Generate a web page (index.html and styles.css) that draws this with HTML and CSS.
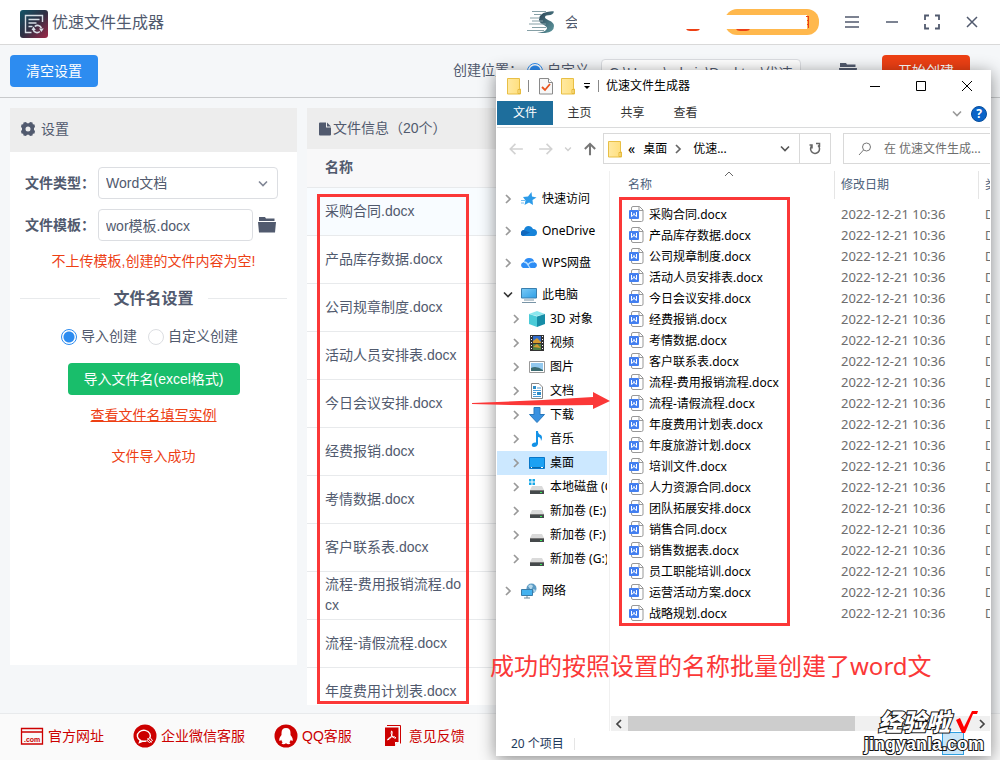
FILE: index.html
```html
<!DOCTYPE html>
<html lang="zh-CN">
<head>
<meta charset="utf-8">
<meta name="viewport" content="width=device-width, initial-scale=1">
<title>优速文件生成器</title>
<link rel="stylesheet" href="styles.css">
</head>
<body>
<svg class="sprite" aria-hidden="true">
  <defs>
    <linearGradient id="g-logo" x1="0" y1="0" x2="1" y2="1"><stop offset="0" stop-color="#125468"/><stop offset=".5" stop-color="#2f2f43"/><stop offset="1" stop-color="#a02848"/></linearGradient>
    <linearGradient id="g-folder" x1="0" y1="0" x2="1" y2="0"><stop offset="0" stop-color="#ffe9a2"/><stop offset="1" stop-color="#ffdf7c"/></linearGradient>
    <linearGradient id="g-blue" x1="0" y1="0" x2="1" y2="1"><stop offset="0" stop-color="#7ccbf6"/><stop offset="1" stop-color="#2f9fe6"/></linearGradient>
    <linearGradient id="g-s" x1="0" y1="0" x2="1" y2="1"><stop offset="0" stop-color="#263b4e"/><stop offset="1" stop-color="#5f9aa0"/></linearGradient>
  </defs>
  <symbol id="word" viewBox="0 0 15 16"><path d="M4 .5h6.500l3.500 3.500v10q0 1.500-1.500 1.500H4q-1.500 0-1.500-1.500V2q0-1.500 1.500-1.500z" fill="#fff" stroke="#989898"/><path d="M10 .5v4h4" fill="none" stroke="#989898"/><rect x="0" y="4" width="10" height="9" rx="1" fill="#437ff0"/><path d="M2.500 6v4.500L5 8.500l2.500 2V6M5 7v2" fill="none" stroke="#fff"/></symbol>
  <symbol id="folder" viewBox="0 0 14 18"><path d="M.5 1.500h12v10.500h1v5h-13z" fill="url(#g-folder)" stroke="#e8bf45"/><path d="M11 12.500h2v4h-2z" fill="#ffe9a2" stroke="#e5b93b"/></symbol>
  <symbol id="darkfolder" viewBox="0 0 18 16"><path d="M1 0h6l1 1.500h8.500V4H1zM0 5h18l-1 10.500H1z" fill="#515a6e"/></symbol>
  <symbol id="right" viewBox="0 0 8 10"><path d="M2 1l4 4-4 4" fill="none" stroke="currentColor" stroke-width="1.700"/></symbol>
  <symbol id="down" viewBox="0 0 10 8"><path d="M1 1.500l4 4 4-4" fill="none" stroke="currentColor" stroke-width="1.600"/></symbol>
  <symbol id="drive" viewBox="0 0 16 16"><path d="M3 5h10l2 4H1z" fill="#dadada"/><path d="M1 9h14v4H1z" fill="#45494b"/><path d="M1 9h14v1H1z" fill="#777"/><path d="M11 11h2v1h-2z" fill="#38ee5a"/></symbol>
</svg>

<div class="app">
  <header class="app-head">
    <svg class="logo" viewBox="0 0 28 28"><rect width="28" height="28" rx="3" fill="url(#g-logo)"/><g fill="none" stroke="#d7dde5" stroke-width="1.400"><path d="M22.500 12V5.500h-17v17h6M8.500 9.500h11M8.500 13h8M8.500 16.500h4"/><path d="M21.300 18a4 4 0 0 0-6.500-1.500M13.300 20a4 4 0 0 0 6.500 1.500" stroke-width="1.700"/></g><path d="M11.500 20l2-3.500 2.300 3.500zM19 18.500h4.800l-2.400 3.500z" fill="#d7dde5"/></svg>
    <h1 class="app-title">优速文件生成器</h1>
    <div class="member">
      <svg class="s-logo" viewBox="0 0 28 24"><path d="M27 1.500q-1 4-6 3.800-3 0-3 2 0 1.500 4 3.200 5 2 5 5.500 0 6-9 7h-8q9-1 10-4.500 0-2-4-4-4-2-4-5 0-6 8-7.500 5-1 7-.5z" fill="url(#g-s)"/><path d="M5 1.500h14M7 4.500h8M3 8h10M5 11h11M2 14h17M5 17.500h14M0 20.500h17" stroke="#86a0a6" stroke-width="1.200"/></svg>
      <span class="member-text">会</span>
      <div class="promo"><svg viewBox="0 0 136 28"><rect x="40" y="1" width="94" height="26" rx="12" fill="#ffb84d"/><path d="M0 7h122v14H0z" fill="#fff"/><path d="M1 21h14q-1 2-4 2H5q-3 0-4-2zM51 21h14q-1 2-4 2h-6q-3 0-4-2z" fill="#ed4014"/><path d="M121 8.500h3M123.500 9v11M122 12.500h2M122 16.500h2" fill="none" stroke="#ed4014"/></svg></div>
    </div>
    <div class="app-controls">
      <button class="plain" aria-label="菜单"><svg viewBox="0 0 16 16"><path d="M1 3h14M1 8h14M1 13h14" stroke="#515a6e" stroke-width="1.500"/></svg></button>
      <button class="plain" aria-label="最小化"><svg viewBox="0 0 16 16"><path d="M2 8h12" stroke="#515a6e" stroke-width="1.500"/></svg></button>
      <button class="plain" aria-label="全屏"><svg viewBox="0 0 16 16"><path d="M1 6V1.500h4M11 1.500h4V6M15 10v4.500h-4M5 14.500H1V10" fill="none" stroke="#515a6e" stroke-width="1.800"/></svg></button>
      <button class="plain" aria-label="关闭"><svg viewBox="0 0 16 16"><path d="M3 3l10 10M13 3L3 13" stroke="#515a6e" stroke-width="1.500"/></svg></button>
    </div>
  </header>

  <div class="toolbar">
    <button class="btn btn-blue">清空设置</button>
    <div class="target">
      <div class="target-choice"><span>创建位置：</span><label class="radio"><input type="radio" name="target" checked>自定义</label></div>
      <input class="field target-path" type="text" value="C:\Users\admin\Desktop\优速" aria-label="创建路径">
      <button class="plain target-browse" aria-label="浏览"><svg class="ic-folder"><use href="#darkfolder"/></svg></button>
      <button class="btn btn-red">开始创建</button>
    </div>
  </div>

  <main class="content">
    <section class="panel settings">
      <h2 class="panel-head"><svg class="gear" viewBox="0 0 16 16"><path fill="#515a6e" fill-rule="evenodd" d="M3.500 1.500L6 1l1 1.200h2L10 1l2.500.5.3 1.700 1.700.3L15 6l-1 1v2l1 1-.5 2.500-1.700.3-.3 1.700L10 15l-1-1.200H7L6 15l-2.500-.5-.3-1.700-1.700-.3L1 10l1-1V7L1 6l.5-2.500 1.700-.3zM8 5.500a2.500 2.500 0 1 0 0 5 2.500 2.500 0 0 0 0-5z"/></svg>设置</h2>
      <form class="settings-body">
        <div class="form-row"><label class="form-label" for="type">文件类型：</label><div class="select-wrap"><select class="field" id="type"><option>Word文档</option></select><svg class="select-arrow"><use href="#down"/></svg></div></div>
        <div class="form-row"><label class="form-label" for="tpl">文件模板：</label><input class="field tpl" id="tpl" type="text" value="wor模板.docx"><button type="button" class="plain" aria-label="选择模板"><svg class="ic-folder"><use href="#darkfolder"/></svg></button></div>
        <p class="warn">不上传模板,创建的文件内容为空!</p>
        <h3 class="divider">文件名设置</h3>
        <div class="choices"><label class="radio"><input type="radio" name="mode" checked>导入创建</label><label class="radio"><input type="radio" name="mode">自定义创建</label></div>
        <button type="button" class="btn btn-green">导入文件名(excel格式)</button>
        <a class="example" href="#">查看文件名填写实例</a>
        <p class="warn">文件导入成功</p>
      </form>
    </section>

    <section class="panel files">
      <h2 class="panel-head"><svg class="ic-file" viewBox="0 0 12 14"><path d="M1 0.500h6v5h5v7q0 1-1 1H1q-1 0-1-1V1.500q0-1 1-1zM8 .5l4 4H8z" fill="#515a6e"/></svg>文件信息（20个）</h2>
      <table class="names">
        <thead><tr><th class="col-name">名称</th><th></th></tr></thead>
        <tbody>
          <tr class="current"><td>采购合同.docx</td><td></td></tr>
          <tr><td>产品库存数据.docx</td><td></td></tr>
          <tr><td>公司规章制度.docx</td><td></td></tr>
          <tr><td>活动人员安排表.docx</td><td></td></tr>
          <tr><td>今日会议安排.docx</td><td></td></tr>
          <tr><td>经费报销.docx</td><td></td></tr>
          <tr><td>考情数据.docx</td><td></td></tr>
          <tr><td>客户联系表.docx</td><td></td></tr>
          <tr><td>流程-费用报销流程.docx</td><td></td></tr>
          <tr><td>流程-请假流程.docx</td><td></td></tr>
          <tr><td>年度费用计划表.docx</td><td></td></tr>
        </tbody>
      </table>
    </section>
  </main>

  <footer class="app-foot">
    <a href="#"><svg viewBox="0 0 24 24"><path d="M1.500 4.500h21v15.500h-21zM1.500 8h21" fill="none" stroke="#c00" stroke-width="1.300"/><text x="4" y="18" class="com">.com</text></svg>官方网址</a>
    <a href="#"><svg viewBox="0 0 24 24"><circle cx="12" cy="12" r="11.500" fill="#c00"/><path d="M16.500 14.500a6.500 5.500 0 1 0-3 2.300M7.500 15.500l-1 3 3.500-1.500" fill="none" stroke="#fff" stroke-width="1.400"/><path d="M17 13.500l2.500 3-3 2-2.500-2zM14.500 14l4 4.500" fill="#c00" stroke="#fff"/></svg>企业微信客服</a>
    <a href="#"><svg viewBox="0 0 24 24"><circle cx="12" cy="12" r="11.500" fill="#c00"/><path d="M12 4q-4.500 0-4.500 5v2q-3 3.500-2 6 .8 0 1.700-1.200.4 1.600 1.500 2.500-1.200.5-1 1.500 2.200 1.200 4.300-.5 2.100 1.700 4.300.5.200-1-1-1.500 1.100-.9 1.500-2.500.9 1.200 1.700 1.200 1-2.500-2-6V9q0-5-4.500-5z" fill="#fff"/></svg>QQ客服</a>
    <a href="#"><svg viewBox="0 0 24 24"><path d="M6 1.500h13.500v18" fill="none" stroke="#c00"/><path d="M4 3.500h13.500V17l-4 5H4z" fill="#c00"/><path d="M13.500 22v-4.500h4" fill="#fff" stroke="#c00"/><path d="M10.500 7q1.500 0 0 5-2 4-4 4 0-2 4-3 4-1 4.500 1-1.500 1-4-2-1.500-3-.5-5z" fill="none" stroke="#fff"/></svg>意见反馈</a>
  </footer>
</div>

<section class="explorer" aria-label="文件资源管理器">
  <div class="ex-title">
    <div class="quick"><svg class="ic-f"><use href="#folder"/></svg><i class="bar"></i><svg class="ic-f" viewBox="0 0 14 18"><path d="M.5 1.500h9l4 4v11.500H.5z" fill="#f7f7f7" stroke="#8a8a8a"/><path d="M9.500 1.500v4h4" fill="#fff" stroke="#8a8a8a"/><path d="M3 10l3 3 5-6" fill="none" stroke="#e8531c" stroke-width="1.800"/></svg><svg class="ic-f"><use href="#folder"/></svg><svg class="ic-drop" viewBox="0 0 8 8"><path d="M1 1.500h6" stroke="#000"/><path d="M1 4h6L4 7z"/></svg><i class="bar"></i></div>
    <span class="ex-name">优速文件生成器</span>
    <div class="ex-controls">
      <button class="plain" aria-label="最小化"><svg viewBox="0 0 12 12"><path d="M1 6.500h10" stroke="#000"/></svg></button>
      <button class="plain" aria-label="最大化"><svg viewBox="0 0 12 12"><path d="M1.500 1.500h9v9h-9z" fill="none" stroke="#000"/></svg></button>
      <button class="plain" aria-label="关闭"><svg viewBox="0 0 12 12"><path d="M1 1l10 10M11 1L1 11" stroke="#000"/></svg></button>
    </div>
  </div>
  <nav class="tabs"><button class="plain tab active">文件</button><button class="plain tab">主页</button><button class="plain tab">共享</button><button class="plain tab">查看</button>
    <span class="tab-end"><svg class="ic-down"><use href="#down"/></svg><svg class="ic-help" viewBox="0 0 16 16"><circle cx="8" cy="8" r="7.500" fill="#0a64c8" stroke="#084e9c"/><text x="8" y="12" text-anchor="middle" class="help">?</text></svg></span>
  </nav>
  <div class="address">
    <div class="moves">
      <button class="plain" aria-label="后退"><svg viewBox="0 0 14 14"><path d="M13 7H2M6.500 2.500L2 7l4.500 4.500" fill="none" stroke="#d2d2d2" stroke-width="1.400"/></svg></button>
      <button class="plain" aria-label="前进"><svg viewBox="0 0 14 14"><path d="M1 7h11M7.500 2.500L12 7l-4.500 4.500" fill="none" stroke="#d2d2d2" stroke-width="1.400"/></svg></button>
      <button class="plain small" aria-label="最近"><svg viewBox="0 0 14 14"><path d="M3 5l4 4 4-4" fill="none" stroke="#cfcfcf" stroke-width="2"/></svg></button>
      <button class="plain" aria-label="向上"><svg viewBox="0 0 14 14"><path d="M7 12.500V3M2.500 7L7 2.500 11.500 7" fill="none" stroke="#777" stroke-width="1.800"/></svg></button>
    </div>
    <div class="path"><svg class="ic-f"><use href="#folder"/></svg><span class="crumb-more">«</span><a href="#">桌面</a><svg class="ic-right"><use href="#right"/></svg><a href="#">优速...</a><svg class="ic-down push"><use href="#down"/></svg>
      <button class="plain refresh" aria-label="刷新"><svg viewBox="0 0 14 14"><path d="M10 3.500a4.500 4.500 0 1 1-5.500-.3M4 6.500V3H1.500M8 1.500h3.500V5" fill="none" stroke="#666" stroke-width="1.500"/></svg></button></div>
    <label class="search"><svg viewBox="0 0 14 14"><circle cx="8.500" cy="5" r="4" fill="none" stroke="#777"/><path d="M5.500 8L1 13" stroke="#777"/></svg><input type="text" placeholder="在 优速文件生成..." aria-label="搜索"></label>
  </div>
  <div class="ex-main">
    <ul class="tree">
      <li class="top"><svg class="ic-right"><use href="#right"/></svg><svg class="ic" viewBox="0 0 16 16"><path d="M10.500 1l.5 4.500 4.500 1-4 2.500.5 5-4-2.500L3.500 14l1-4.500L2 6l5-.5z" fill="#2d9be8"/><path d="M0 9.500h4M0 12h3" stroke="#74bdf0"/></svg>快速访问</li>
      <li class="top"><svg class="ic-right"><use href="#right"/></svg><svg class="ic" viewBox="0 0 16 16"><path d="M2 13q-2-.5-2-3t3-3q1-4 4.500-4 3 0 4.500 3 4 0 4 4 0 2.500-2.500 3z" fill="#1683d9"/><path d="M1 7.500q2-1 3 0l5 2L2 13q-3-1-2-3.500z" fill="#1268bd"/></svg>OneDrive</li>
      <li class="top"><svg class="ic-right"><use href="#right"/></svg><svg class="ic" viewBox="0 0 16 16"><path d="M2 13q-2-1-2-3t3-3q1-4 5-4 5 0 5 4 3 1 3 3t-2 3z" fill="#2d8df5"/><path d="M3 7q3 0 4 3l2 3M7 10q2-4 6-3" fill="none" stroke="#b8defe" stroke-width="1.300"/></svg>WPS网盘</li>
      <li class="top open"><svg class="ic-down"><use href="#down"/></svg><svg class="ic" viewBox="0 0 16 16"><path d="M.5 1.500h15v9.500H.5z" fill="url(#g-blue)" stroke="#3a7fae"/><path d="M1 15.500h14M3 13h10" stroke="#7894a6"/></svg>此电脑</li>
      <li><svg class="ic-right"><use href="#right"/></svg><svg class="ic" viewBox="0 0 16 16"><path d="M0 3l8-3 8 3-8 2z" fill="#8be7ee"/><path d="M0 3l8 2.500V16l-8-3z" fill="#4acbd8"/><path d="M8 5.500L16 3v10l-8 3z" fill="#168da7"/></svg>3D 对象</li>
      <li><svg class="ic-right"><use href="#right"/></svg><svg class="ic" viewBox="0 0 16 16"><path d="M1 0h14v16H1z" fill="#333"/><path d="M4 1h8v7H4z" fill="#316ccb"/><path d="M4 9h8v6H4z" fill="#507f45"/><path d="M4 6l4-3 4 4v1H4zM4 12l4-3 4 4" fill="#d29a30"/><path d="M2.500 1v15M13.500 1v15" stroke="#fff" stroke-dasharray="1 2"/></svg>视频</li>
      <li><svg class="ic-right"><use href="#right"/></svg><svg class="ic" viewBox="0 0 16 16"><path d="M.5 2.500h15v11H.5z" fill="#fff" stroke="#999"/><path d="M2 4h12v8H2z" fill="#93c9ef"/><path d="M2 9q5-3 12 2v1H2z" fill="#3c6c72"/></svg>图片</li>
      <li><svg class="ic-right"><use href="#right"/></svg><svg class="ic" viewBox="0 0 16 16"><path d="M2.500.5H10l3.500 3.500v11.500h-11z" fill="#fff" stroke="#888"/><path d="M8 5h4M4 7.500h8M4 9.500h3M4 11.500h3M4 13.500h8" stroke="#4a9bd4"/><path d="M4 3h3v3H4zM8 9h4v3H8z" fill="#2d8cc7"/></svg>文档</li>
      <li><svg class="ic-right"><use href="#right"/></svg><svg class="ic" viewBox="0 0 16 16"><path d="M5 .5h6v7h4.500L8 15.500.5 7.500H5z" fill="#3991e0" stroke="#2878bd"/></svg>下载</li>
      <li><svg class="ic-right"><use href="#right"/></svg><svg class="ic" viewBox="0 0 16 16"><path d="M7 0h2q0 3 3 4 2 2 0 6 0-4-3-4v7q-1 3-4 3-3-.5-2-3 1-2 4-1.500z" fill="#1492e6"/></svg>音乐</li>
      <li class="selected"><svg class="ic-right"><use href="#right"/></svg><svg class="ic" viewBox="0 0 16 16"><path d="M.5 2.500h15v11H.5z" fill="#1ca1f3" stroke="#0877c9"/><path d="M1 12.500h14" stroke="#0b67a8"/><path d="M2 12.500h1M12 12.500h2" stroke="#fff"/></svg>桌面</li>
      <li><svg class="ic-right"><use href="#right"/></svg><svg class="ic" viewBox="0 0 16 16"><use href="#drive" y="2" width="16" height="16"/><path d="M0 0h2.500v2.500H0zM3.500 0H6v2.500H3.500zM0 3.500h2.500V6H0zM3.500 3.500H6V6H3.500z" fill="#18a8e8"/></svg>本地磁盘 (C:)</li>
      <li><svg class="ic-right"><use href="#right"/></svg><svg class="ic"><use href="#drive" y="2" width="16" height="16"/></svg>新加卷 (E:)</li>
      <li><svg class="ic-right"><use href="#right"/></svg><svg class="ic"><use href="#drive" y="2" width="16" height="16"/></svg>新加卷 (F:)</li>
      <li><svg class="ic-right"><use href="#right"/></svg><svg class="ic"><use href="#drive" y="2" width="16" height="16"/></svg>新加卷 (G:)</li>
      <li class="top net"><svg class="ic-right"><use href="#right"/></svg><svg class="ic" viewBox="0 0 16 16"><circle cx="10.500" cy="5.500" r="5" fill="#5c9bc4"/><path d="M7 3q3-3 5 0l-2 4zM12 6l3 1-2 3z" fill="#b5d8eb"/><path d="M.5 6.500h11v6H.5z" fill="#44b2ef" stroke="#397ca9"/><path d="M3 15h6M6 13v2" stroke="#708b9a"/></svg>网络</li>
    </ul>
    <div class="list">
      <div class="list-view">
      <table class="listing">
        <thead><tr><th class="c-name">名称<svg class="sort" viewBox="0 0 10 6"><path d="M1 5l4-4 4 4" fill="none" stroke="#666"/></svg></th><th class="c-date">修改日期</th><th class="c-type">类型</th></tr></thead>
        <tbody>
          <tr><td><svg class="ic-w"><use href="#word"/></svg>采购合同.docx</td><td>2022-12-21 10:36</td><td>DOCX</td></tr>
          <tr><td><svg class="ic-w"><use href="#word"/></svg>产品库存数据.docx</td><td>2022-12-21 10:36</td><td>DOCX</td></tr>
          <tr><td><svg class="ic-w"><use href="#word"/></svg>公司规章制度.docx</td><td>2022-12-21 10:36</td><td>DOCX</td></tr>
          <tr><td><svg class="ic-w"><use href="#word"/></svg>活动人员安排表.docx</td><td>2022-12-21 10:36</td><td>DOCX</td></tr>
          <tr><td><svg class="ic-w"><use href="#word"/></svg>今日会议安排.docx</td><td>2022-12-21 10:36</td><td>DOCX</td></tr>
          <tr><td><svg class="ic-w"><use href="#word"/></svg>经费报销.docx</td><td>2022-12-21 10:36</td><td>DOCX</td></tr>
          <tr><td><svg class="ic-w"><use href="#word"/></svg>考情数据.docx</td><td>2022-12-21 10:36</td><td>DOCX</td></tr>
          <tr><td><svg class="ic-w"><use href="#word"/></svg>客户联系表.docx</td><td>2022-12-21 10:36</td><td>DOCX</td></tr>
          <tr><td><svg class="ic-w"><use href="#word"/></svg>流程-费用报销流程.docx</td><td>2022-12-21 10:36</td><td>DOCX</td></tr>
          <tr><td><svg class="ic-w"><use href="#word"/></svg>流程-请假流程.docx</td><td>2022-12-21 10:36</td><td>DOCX</td></tr>
          <tr><td><svg class="ic-w"><use href="#word"/></svg>年度费用计划表.docx</td><td>2022-12-21 10:36</td><td>DOCX</td></tr>
          <tr><td><svg class="ic-w"><use href="#word"/></svg>年度旅游计划.docx</td><td>2022-12-21 10:36</td><td>DOCX</td></tr>
          <tr><td><svg class="ic-w"><use href="#word"/></svg>培训文件.docx</td><td>2022-12-21 10:36</td><td>DOCX</td></tr>
          <tr><td><svg class="ic-w"><use href="#word"/></svg>人力资源合同.docx</td><td>2022-12-21 10:36</td><td>DOCX</td></tr>
          <tr><td><svg class="ic-w"><use href="#word"/></svg>团队拓展安排.docx</td><td>2022-12-21 10:36</td><td>DOCX</td></tr>
          <tr><td><svg class="ic-w"><use href="#word"/></svg>销售合同.docx</td><td>2022-12-21 10:36</td><td>DOCX</td></tr>
          <tr><td><svg class="ic-w"><use href="#word"/></svg>销售数据表.docx</td><td>2022-12-21 10:36</td><td>DOCX</td></tr>
          <tr><td><svg class="ic-w"><use href="#word"/></svg>员工职能培训.docx</td><td>2022-12-21 10:36</td><td>DOCX</td></tr>
          <tr><td><svg class="ic-w"><use href="#word"/></svg>运营活动方案.docx</td><td>2022-12-21 10:36</td><td>DOCX</td></tr>
          <tr><td><svg class="ic-w"><use href="#word"/></svg>战略规划.docx</td><td>2022-12-21 10:36</td><td>DOCX</td></tr>
        </tbody>
      </table>
      </div>
      <div class="hscroll"><svg class="arrow left"><use href="#right"/></svg><i class="thumb"></i><svg class="arrow"><use href="#right"/></svg></div>
    </div>
  </div>
  <div class="status"><span>20 个项目</span><i class="view-toggle"></i></div>
</section>

<div class="mark mark-names"></div>
<div class="mark mark-listing"></div>
<svg class="mark-arrow" viewBox="0 0 138 20"><path d="M0 11q60-2 121-6V0l17 9-17 8v-4Q60 14 0 12z" fill="#fb3838"/></svg>
<p class="caption">成功的按照设置的名称批量创建了word文</p>
<div class="watermark"><div class="wm-name">经验啦<svg viewBox="0 0 24 24"><path d="M1 10l4-2 4 9L17 1h6l-1 3h-4L10 23H7z" fill="#f00"/></svg></div><div class="wm-site">jingyanla.com</div></div>
</body>
</html>
```
FILE: styles.css
```css
* { box-sizing: border-box; }
html, body { height: 100%; margin: 0; }
body {
  position: relative;
  overflow: hidden;
  font: 14px/21px "Liberation Sans", "Noto Sans CJK SC", sans-serif;
  color: #515a6e;
}
h1, h2, h3, p, ul { margin: 0; padding: 0; font-weight: 400; }
svg { display: block; flex: none; }
a { color: inherit; text-decoration: none; }
button, input, select { font: inherit; color: inherit; }
.sprite { position: absolute; width: 0; height: 0; }
.plain { padding: 0; border: 0; background: none; display: flex; align-items: center; justify-content: center; }

/* Generator window */
.app { display: flex; flex-direction: column; height: 100%; background: #f5f7f9; }
.app-head { display: flex; align-items: center; height: 45px; padding: 0 8px 0 20px; background: #fff; border-bottom: 1px solid #d9d9d9; }
.logo { width: 28px; height: 28px; margin-top: 3px; }
.app-title { flex: 1; margin-left: 4px; font-size: 16px; }
.member { display: flex; align-items: center; margin-right: 11px; }
.s-logo { width: 28px; height: 24px; }
.member-text { width: 12px; margin-left: 10px; overflow: hidden; }
.promo { margin-left: 108px; width: 136px; }
.app-controls { display: flex; }
.app-controls .plain { width: 40px; height: 32px; }
.app-controls svg { width: 16px; height: 16px; }

.toolbar { display: flex; align-items: flex-start; justify-content: space-between; height: 53px; padding: 10px 30px 10px 10px; border-bottom: 1px solid #c8cacc; }
.btn { height: 32px; padding: 0 15px; border: 0; border-radius: 4px; color: #fff; font-size: 14px; }
.btn-blue { width: 88px; background: #2d8cf0; }
.btn-red { width: 88px; background: #ed4014; }
.btn-green { width: 172px; background: #19be6b; }
.target { display: flex; align-items: flex-start; }
.target-choice { display: flex; margin-top: 5px; }
.target-choice .radio { margin-left: 4px; }
.target .target-path { width: 200px; height: 26px; margin: 4px 37px 0 12px; }
.target-browse { width: 20px; height: 32px; margin-right: 24px; }
.ic-folder { width: 18px; height: 16px; }
.field { height: 32px; padding: 0 7px; border: 1px solid #dcdee2; border-radius: 4px; background: #fff; outline: 0; }

.radio { display: flex; align-items: center; gap: 4px; }
.radio input { appearance: none; width: 16px; height: 16px; margin: 0; border: 1px solid #dcdee2; border-radius: 50%; background: #fff; }
.radio input:checked { border-color: #2d8cf0; background: radial-gradient(circle, #2d8cf0 5px, #fff 6px); }

.content { display: flex; flex: 1; gap: 10px; min-height: 0; padding: 10px 10px 8px; }
.panel { background: #fff; }
.panel-head { display: flex; align-items: center; background: #ededed; font-size: 14px; }
.settings { width: 287px; align-self: flex-start; }
.settings .panel-head { height: 44px; padding: 0 0 2px 10px; gap: 5px; }
.gear { width: 16px; height: 16px; }
.settings-body { display: flex; flex-direction: column; align-items: center; padding: 15px 10px 198px; }
.form-row { display: flex; align-items: center; align-self: stretch; padding-left: 5px; margin-bottom: 10px; }
.form-label { width: 73px; font-weight: 700; white-space: nowrap; }
.select-wrap { position: relative; }
.select-wrap .field { width: 180px; appearance: none; }
.select-arrow { position: absolute; right: 10px; top: 13px; width: 10px; height: 8px; color: #808695; }
.tpl { width: 155px; margin-right: 5px; }
.warn { color: #ed4014; }
.divider { display: flex; align-items: center; align-self: stretch; gap: 14px; margin: 16px 0 17px; font-size: 16px; font-weight: 700; }
.divider::before, .divider::after { content: ""; flex: 1; height: 1px; background: #e8eaec; }
.choices { display: flex; gap: 11px; margin-bottom: 16px; align-self: flex-start; margin-left: 41px; }
.example { margin: 10px 0 20px; color: #ed4014; text-decoration: underline; }

.files { flex: 1; min-width: 0; overflow: hidden; }
.files .panel-head { height: 41px; padding-left: 12px; gap: 2px; }
.ic-file { width: 12px; height: 14px; }
.names { width: 100%; table-layout: fixed; border-collapse: collapse; }
.names th { height: 38px; padding: 0 18px; text-align: left; background: #f8f8f9; border-bottom: 1px solid #e8eaec; }
.names td { height: 48px; padding: 0 18px; word-break: break-all; border-bottom: 1px solid #e8eaec; }
.names .col-name { width: 176px; }
.names .current { background: #f8fcff; }

.app-foot { display: flex; align-items: center; gap: 29px; height: 47px; padding: 0 0 2px 20px; background: #fafafa; border-top: 1px solid #e8eaec; color: #c00; }
.app-foot a { display: flex; align-items: center; gap: 4px; }
.app-foot svg { width: 24px; height: 24px; }
.com { font: 700 7px "Liberation Sans", sans-serif; fill: #c00; }

/* Explorer window */
.explorer {
  position: absolute; left: 496px; right: 9px; top: 70px; bottom: 4px;
  display: flex; flex-direction: column; overflow: hidden;
  padding: 0 1px; background: #fff; color: #000;
  font: 12px/18px "Noto Sans", "Noto Sans CJK SC", sans-serif;
  box-shadow: 0 3px 16px rgba(0, 0, 0, .45);
}
.ex-title { display: flex; align-items: center; height: 31px; padding-left: 10px; }
.quick { display: flex; align-items: center; }
.ic-f { width: 14px; height: 18px; }
.bar { width: 1px; height: 12px; margin: 0 7px; background: #888; }
.quick .ic-f + .ic-f { margin-left: 8px; }
.quick .bar + .ic-f { margin-left: 3px; }
.ic-drop { width: 8px; height: 8px; margin-left: 8px; }
.ex-controls { display: flex; margin-left: auto; }
.ex-controls .plain { width: 46px; height: 30px; }
.ex-controls svg { width: 12px; height: 12px; }
.tabs { display: flex; height: 27px; padding-bottom: 3px; border-bottom: 1px solid #dadbdc; }
.tab { width: 53px; height: 24px; color: #333; }
.tab.active { width: 56px; background: #1e6e9c; color: #fff; }
.tab-end { display: flex; align-items: center; gap: 9px; margin: 2px 3px 0 auto; color: #999; }
.ic-help { width: 16px; height: 16px; }
.help { font: 700 12px "Noto Sans", sans-serif; fill: #fff; }
.ic-down { width: 10px; height: 8px; }
.ic-right { width: 8px; height: 10px; color: #999; }

.address { display: flex; height: 43px; padding-top: 5px; }
.moves { display: flex; align-items: center; height: 31px; padding-left: 11px; width: 106px; gap: 14px; }
.moves svg { width: 16px; height: 16px; }
.moves .small { width: 8px; margin: 0 -4px; }
.moves .small svg { width: 10px; height: 10px; }
.path { display: flex; align-items: center; flex: none; width: 228px; height: 31px; padding-left: 4px; border: 1px solid #d9d9d9; color: #000; }
.crumb-more { margin: 0 8px 0 6px; font-size: 14px; }
.path .ic-right { margin: 0 11px 0 7px; color: #666; }
.path .push { margin: 0 9px 0 auto; color: #555; }
.refresh { width: 31px; height: 29px; border-left: 1px solid #d9d9d9; }
.refresh svg { width: 14px; height: 14px; }
.search { display: flex; align-items: center; flex: 1; min-width: 0; height: 31px; margin-left: 12px; padding-left: 14px; gap: 12px; border: 1px solid #d9d9d9; border-right: 0; }
.search svg { width: 14px; height: 14px; }
.search input { flex: 1; min-width: 0; padding: 0; border: 0; outline: 0; }
.search input::placeholder { color: #6d6d6d; opacity: 1; }

.ex-main { display: flex; flex: 1; min-height: 0; }
.tree { width: 113px; padding-top: 16px; border-right: 1px solid #f0f0f0; list-style: none; overflow: hidden; }
.tree li { display: flex; align-items: center; width: 110px; height: 24px; padding-left: 15px; white-space: nowrap; overflow: hidden; }
.tree .top { padding-left: 7px; margin-bottom: 8px; }
.tree .open { margin-bottom: 0; padding-left: 6px; }
.tree .net { margin-top: 8px; }
.tree .ic { width: 16px; height: 16px; margin: 0 5px 0 9px; }
.tree .ic-down { margin-right: -1px; color: #333; }
.tree .selected { background: #cce8ff; }

.list { display: flex; flex-direction: column; flex: 1; min-width: 0; }
.list-view { flex: 1; min-height: 0; overflow: hidden; }
.listing { width: 100%; table-layout: fixed; border-spacing: 0; }
.listing th { position: relative; height: 28px; padding: 0 0 0 6px; border-right: 1px solid #e5e5e5; color: #4c607a; font-weight: 400; text-align: left; white-space: nowrap; overflow: hidden; }
.listing .c-name { width: 225px; padding-left: 18px; }
.listing .c-date { width: 144px; }
.listing .c-type { border: 0; }
.sort { position: absolute; left: 114px; top: 0; width: 10px; height: 6px; }
.listing td { height: 21px; padding: 0 0 0 6px; color: #6d6d6d; line-height: 21px; white-space: nowrap; overflow: hidden; }
.listing tbody::before { content: ""; display: table-row; height: 5px; }
.listing td:first-child { padding-left: 19px; color: #000; }
.listing td:nth-child(2) { font-size: 13px; }
.ic-w { display: inline-block; width: 15px; height: 16px; margin: 2px 5px 0 0; vertical-align: top; }
.hscroll { display: flex; align-items: center; height: 15px; margin-left: 1px; background: #f0f0f0; color: #444; }
.arrow { width: 8px; height: 10px; margin: 0 4px 0 auto; color: #444; }
.arrow.left { margin: 0 5px 0 4px; transform: rotate(180deg); }
.thumb { width: 60%; height: 15px; background: #cdcdcd; }
.status { display: flex; align-items: center; justify-content: space-between; height: 25px; padding: 0 26px 0 14px; color: #1e395b; }
.status span { padding-right: 10px; border-right: 1px solid #e5e5e5; line-height: 12px; }
.view-toggle { width: 22px; height: 23px; border: 1px solid #2d9fe0; background: #c9e6f8; }

/* Annotations drawn over both windows */
.mark { position: absolute; border: 3px solid #fb3838; }
.mark-names { left: 317px; top: 194px; width: 152px; height: 510px; }
.mark-listing { left: 619px; top: 197px; width: 171px; height: 429px; }
.mark-arrow { position: absolute; left: 472px; top: 392px; width: 138px; height: 20px; }
.caption { position: absolute; left: 490px; top: 648px; font: 24px/36px "Noto Sans", "Noto Sans CJK SC", sans-serif; color: #fb3838; white-space: nowrap; }
.watermark { position: absolute; right: 16px; bottom: 6px; color: #fff; font-family: "Noto Sans", "Noto Sans CJK SC", sans-serif; font-weight: 900; -webkit-text-stroke: 2px #111; paint-order: stroke fill; }
.wm-name { display: flex; align-items: center; justify-content: flex-end; gap: 5px; padding-right: 5px; font-size: 24px; line-height: 24px; font-style: italic; }
.wm-name svg { width: 24px; height: 24px; }
.wm-site { font: 700 18px/20px "Liberation Sans", sans-serif; text-align: right; }
```
